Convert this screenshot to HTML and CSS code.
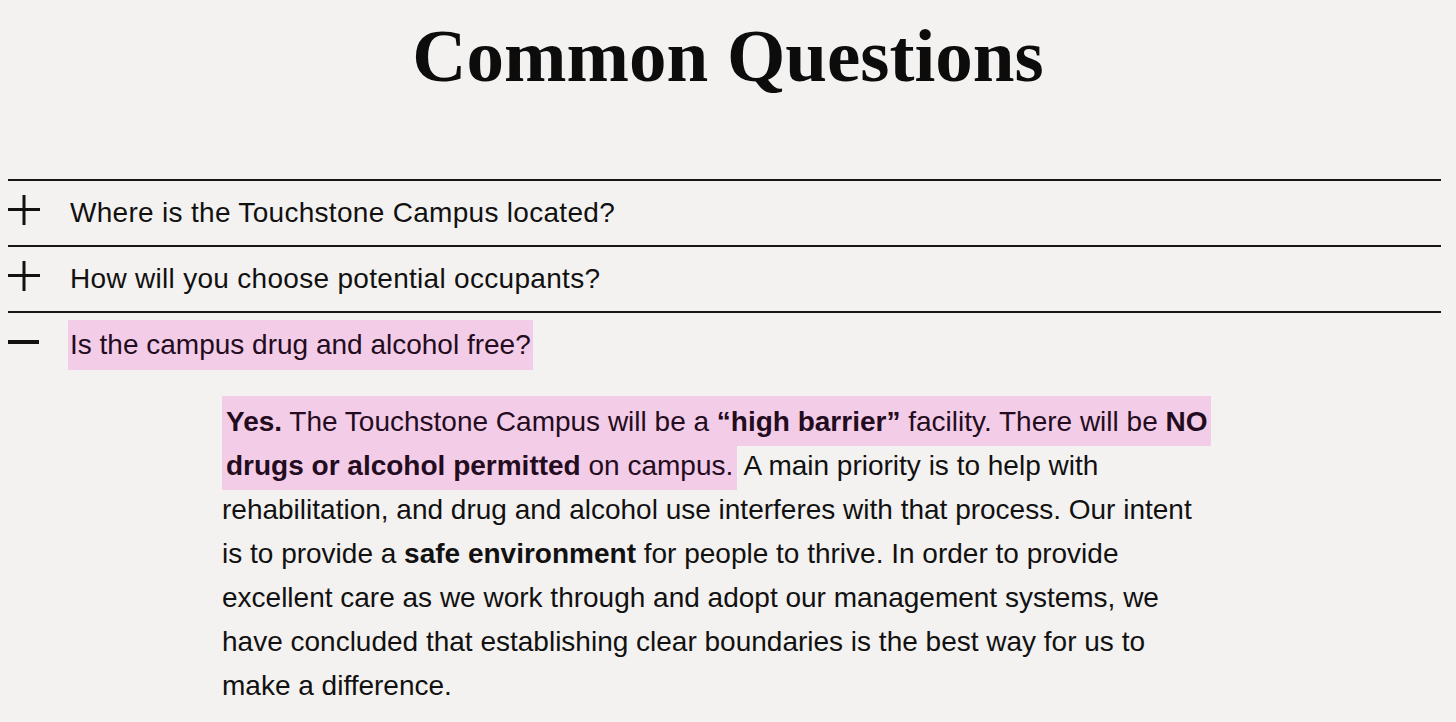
FILE: index.html
```html
<!DOCTYPE html>
<html lang="en">
<head>
<meta charset="utf-8">
<title>Common Questions</title>
<link rel="stylesheet" href="styles.css">
</head>
<body>
<main class="page">
  <h1 class="title">Common Questions</h1>
  <section class="faq">
    <div class="faq-item">
      <div class="faq-q">
        <svg class="faq-icon" viewBox="0 0 32 32" width="32" height="32" aria-hidden="true"><rect x="0" y="14" width="32" height="3" fill="#111"/><rect x="14.5" y="1" width="3" height="30" fill="#111"/></svg>
        <span class="faq-text">Where is the Touchstone Campus located?</span>
      </div>
    </div>
    <div class="faq-item">
      <div class="faq-q">
        <svg class="faq-icon" viewBox="0 0 32 32" width="32" height="32" aria-hidden="true"><rect x="0" y="14" width="32" height="3" fill="#111"/><rect x="14.5" y="1" width="3" height="30" fill="#111"/></svg>
        <span class="faq-text">How will you choose potential occupants?</span>
      </div>
    </div>
    <div class="faq-item open">
      <div class="faq-q">
        <svg class="faq-icon" viewBox="0 0 32 32" width="32" height="32" aria-hidden="true"><rect x="0" y="14" width="31" height="4" fill="#111"/></svg>
        <span class="faq-text hl">Is the campus drug and alcohol free?</span>
      </div>
      <p class="faq-a"><span class="hl hl-block"><b>Yes.</b> The Touchstone Campus will be a <b>“high barrier”</b> facility. There will be <b>NO drugs or alcohol permitted</b> on campus.</span> A main priority is to help with rehabilitation, and drug and alcohol use interferes with that process. Our intent is to provide a <b>safe environment</b> for people to thrive. In order to provide excellent care as we work through and adopt our management systems, we have concluded that establishing clear boundaries is the best way for us to make a difference.</p>
    </div>
  </section>
</main>
</body>
</html>
```
FILE: styles.css
```css
html, body {
  margin: 0;
  padding: 0;
  background: #f4f2f0;
}
body {
  font-family: "Liberation Sans", Arial, sans-serif;
  color: #111;
  height: 722px;
  overflow: hidden;
}
.page {
  display: flex;
  flex-direction: column;
}
.title {
  margin: 18px 0 0 0;
  font-family: "Liberation Serif", "Times New Roman", serif;
  font-weight: 700;
  font-size: 75px;
  line-height: 75px;
  text-align: center;
  color: #0c0c0c;
}
.faq {
  margin: 86px 15px 0 8px;
}
.faq-item {
  border-top: 2px solid #161616;
}
.faq-q {
  display: flex;
  align-items: center;
  height: 64px;
  gap: 30px;
}
.faq-icon {
  flex: none;
  display: block;
  margin-bottom: 6px;
}
.faq-text {
  font-size: 28px;
  line-height: 32px;
  letter-spacing: 0.3px;
}
.faq-text.hl {
  margin-left: -2px;
  padding: 9px 2px 9px 2px;
  letter-spacing: 0;
}
.hl {
  background: #f3cce8;
  color: #240c20;
}
.faq-a {
  margin: 23px 0 0 214px;
  max-width: 992px;
  font-size: 28px;
  line-height: 44px;
}
.hl-block {
  padding: 10px 4px 9px 4px;
  -webkit-box-decoration-break: clone;
  box-decoration-break: clone;
}
.faq-a b {
  font-weight: 700;
}
```
